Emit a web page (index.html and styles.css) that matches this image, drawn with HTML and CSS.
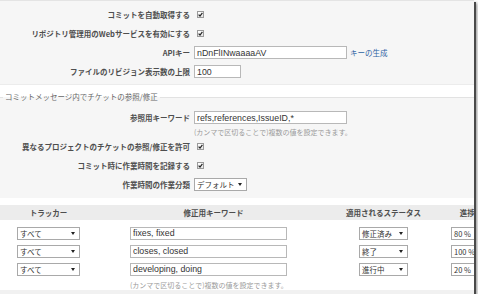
FILE: index.html
```html
<!DOCTYPE html>
<html lang="ja">
<head>
<meta charset="utf-8">
<title>リポジトリ設定</title>
<link rel="stylesheet" href="styles.css">
</head>
<body>
<div class="frame">
  <div class="general">
    <div class="row"><span class="lbl">コミットを自動取得する</span><span class="cb"><svg width="5" height="5" viewBox="0 0 5 5"><path d="M0.6 2.6 L2 4 L4.4 0.8" fill="none" stroke="#222" stroke-width="1.2"/></svg></span></div>
    <div class="row"><span class="lbl">リポジトリ管理用のWebサービスを有効にする</span><span class="cb"><svg width="5" height="5" viewBox="0 0 5 5"><path d="M0.6 2.6 L2 4 L4.4 0.8" fill="none" stroke="#222" stroke-width="1.2"/></svg></span></div>
    <div class="row"><span class="lbl">APIキー</span><input class="inp w-key" value="nDnFlINwaaaaAV" readonly><a class="gen" href="#">キーの生成</a></div>
    <div class="row"><span class="lbl">ファイルのリビジョン表示数の上限</span><input class="inp w-num" value="100" readonly></div>
  </div>

  <fieldset class="refs">
    <legend>コミットメッセージ内でチケットの参照/修正</legend>
    <div class="row"><span class="lbl">参照用キーワード</span><input class="inp w-key" value="refs,references,IssueID,*" readonly></div>
    <div class="hint hint-a">(カンマで区切ることで)複数の値を設定できます。</div>
    <div class="row"><span class="lbl">異なるプロジェクトのチケットの参照/修正を許可</span><span class="cb"><svg width="5" height="5" viewBox="0 0 5 5"><path d="M0.6 2.6 L2 4 L4.4 0.8" fill="none" stroke="#222" stroke-width="1.2"/></svg></span></div>
    <div class="row"><span class="lbl">コミット時に作業時間を記録する</span><span class="cb"><svg width="5" height="5" viewBox="0 0 5 5"><path d="M0.6 2.6 L2 4 L4.4 0.8" fill="none" stroke="#222" stroke-width="1.2"/></svg></span></div>
    <div class="row"><span class="lbl">作業時間の作業分類</span><span class="sel w-act"><span>デフォルト</span><i class="arr"></i></span></div>
  </fieldset>

  <div class="kw">
    <div class="kw-head">
      <span>トラッカー</span>
      <span>修正用キーワード</span>
      <span>適用されるステータス</span>
      <span>進捗率</span>
    </div>
    <div class="kw-body">
      <div class="kw-row">
        <span class="sel w-trk"><span>すべて</span><i class="arr"></i></span>
        <input class="inp w-kw" value="fixes, fixed" readonly>
        <span class="sel w-st"><span>修正済み</span><i class="arr"></i></span>
        <span class="sel w-pr"><span>80 %</span><i class="arr"></i></span>
      </div>
      <div class="kw-row">
        <span class="sel w-trk"><span>すべて</span><i class="arr"></i></span>
        <input class="inp w-kw" value="closes, closed" readonly>
        <span class="sel w-st"><span>終了</span><i class="arr"></i></span>
        <span class="sel w-pr"><span>100 %</span><i class="arr"></i></span>
      </div>
      <div class="kw-row">
        <span class="sel w-trk"><span>すべて</span><i class="arr"></i></span>
        <input class="inp w-kw" value="developing, doing" readonly>
        <span class="sel w-st"><span>進行中</span><i class="arr"></i></span>
        <span class="sel w-pr"><span>20 %</span><i class="arr"></i></span>
      </div>
    </div>
    <div class="hint hint-b">(カンマで区切ることで)複数の値を設定できます。</div>
    <div class="foot"></div>
  </div>
</div>
</body>
</html>
```

FILE: styles.css
```css
* { box-sizing: border-box; }
html, body { margin: 0; padding: 0; background: #fff; }
body {
  font-family: "Noto Sans CJK JP", "Liberation Sans", sans-serif;
  color: #4e4e4e;
}
.frame {
  width: 474px;
  height: 294px;
  overflow: hidden;
  background: #fff;
  box-shadow: 2px 2px 0 #4a4a4a, 3px 3px 3px rgba(0, 0, 0, 0.45);
}

/* general settings box */
.general {
  background: #f6f6f6;
  border-top: 1px solid #e4e4e4;
  border-bottom: 1px solid #ececec;
  padding: 4px 0 3px;
}
.row {
  display: flex;
  align-items: center;
  height: 19px;
}
.lbl {
  width: 190px;
  text-align: right;
  font-weight: bold;
  font-size: 7.5px;
  line-height: 10px;
  color: #4e4e4e;
  margin-right: 4px;
  white-space: nowrap;
}
.cb {
  width: 7px;
  height: 7px;
  margin-left: 3px;
  border: 1px solid #9a9a9a;
  background: linear-gradient(#fff, #e6e6e6);
  display: inline-flex;
  align-items: center;
  justify-content: center;
}
.cb svg { display: block; }

.inp {
  height: 13px;
  border: 1px solid #b8b8b8;
  background: #fff;
  font-family: "Liberation Sans", "Noto Sans CJK JP", sans-serif;
  font-size: 8.8px;
  color: #333;
  padding: 0 2px;
  margin: 0;
  outline: none;
}
.w-key { width: 153px; }
.w-num { width: 47px; }
.w-kw { width: 157px; }

.gen {
  margin-left: 3px;
  font-size: 7.5px;
  color: #2d62a3;
  text-decoration: none;
}

/* fieldset */
.refs {
  margin: 6px 0 0;
  padding: 5px 0 4px;
  border: 0;
  border-top: 1px solid #e2e2e2;
  background: #f6f6f6;
  min-width: 0;
}
.refs legend {
  margin-left: 3px;
  padding: 0 2px;
  font-size: 7.5px;
  line-height: 12px;
  color: #666;
}
.hint {
  font-size: 7px;
  line-height: 10px;
  color: #9a9a9a;
}
.hint-a { padding-left: 194px; }

/* select boxes */
.sel {
  height: 13px;
  border: 1px solid #a9a9a9;
  background: #fff;
  display: inline-flex;
  align-items: center;
  justify-content: space-between;
  padding: 0 4px 0 2px;
  font-size: 7.5px;
  color: #333;
  white-space: nowrap;
}
.arr {
  width: 0;
  height: 0;
  border-left: 2px solid transparent;
  border-right: 2px solid transparent;
  border-top: 3px solid #222;
}
.w-act { width: 53px; }
.w-trk { width: 63px; }
.w-st { width: 49px; }
.w-pr { width: 40px; }

/* keyword table */
.kw { margin-top: 7px; }
.kw-head,
.kw-row {
  display: grid;
  grid-template-columns: 97px 233px 107px 68px;
  width: 505px;
}
.kw-head {
  height: 15px;
  align-items: center;
  background: #ececec;
  font-weight: bold;
  font-size: 7.5px;
  color: #4e4e4e;
}
.kw-head span { text-align: center; }
.kw-body { padding-top: 4px; }
.kw-row {
  height: 18px;
  align-items: center;
  justify-items: center;
}
.kw-row .w-kw { justify-self: start; margin-left: 33px; }
.hint-b { padding-left: 130px; margin-top: 2px; }
.foot {
  height: 4px;
  background: #f1f1f1;
}
```
